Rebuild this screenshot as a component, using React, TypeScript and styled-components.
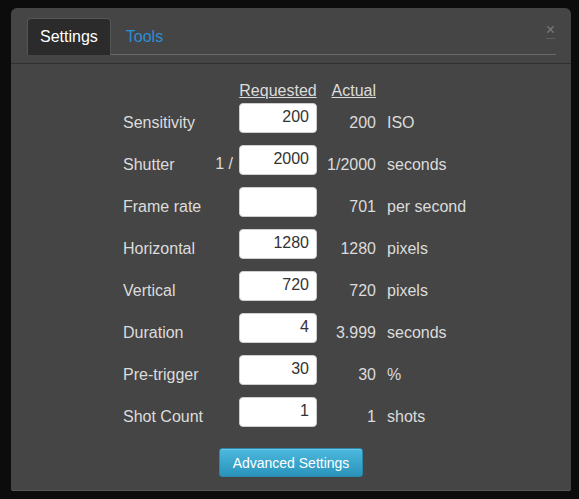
import React from "react";
import styled, { createGlobalStyle } from "styled-components";

const Global = createGlobalStyle`
  html, body { margin: 0; padding: 0; background: #0c0c0c; }
  body { font-family: "Liberation Sans", Arial, sans-serif; }
  #root { width: 579px; height: 499px; }
`;

const Page = styled.div`
  width: 579px;
  height: 499px;
  padding: 8px 8px 0 11px;
  box-sizing: border-box;
  background: #0c0c0c;
`;

const Dialog = styled.div`
  position: relative;
  width: 560px;
  height: 483px;
  box-sizing: border-box;
  background: #454545;
  border-radius: 6px 6px 2px 2px;
  border-bottom: 1px solid #585858;
  display: flex;
  flex-direction: column;
`;

const TitleBar = styled.div`
  height: 56px;
  box-sizing: border-box;
  padding: 9px 15px 0 16px;
  border-bottom: 1px solid #303030;
`;

const TabList = styled.div`
  display: flex;
  gap: 2px;
  height: 37px;
  border-bottom: 1px solid #6a6a6a;
  align-items: flex-end;
`;

const Tab = styled.div<{ $active?: boolean }>`
  height: 37px;
  box-sizing: border-box;
  padding: 0 12px;
  display: flex;
  align-items: center;
  font-size: 16px;
  margin-bottom: -1px;
  color: ${(p) => (p.$active ? "#ffffff" : "#2b8fd8")};
  background: ${(p) => (p.$active ? "#2b2b2b" : "transparent")};
  border: 1px solid ${(p) => (p.$active ? "#565656" : "transparent")};
  border-bottom: none;
  border-radius: 4px 4px 0 0;
`;

const Close = styled.div`
  position: absolute;
  right: 16px;
  top: 14px;
  font-size: 16px;
  line-height: 16px;
  color: #7a7a7a;
  border-bottom: 1px solid #5e5e5e;
`;

const Body = styled.div`
  flex: 1;
  padding: 15px 0 0 112px;
  display: flex;
  flex-direction: column;
`;

const Grid = styled.div`
  display: grid;
  grid-template-columns: 90px 26px 78px 59px auto;
  grid-template-rows: 12px;
  grid-auto-rows: 30px;
  row-gap: 12px;
  align-items: center;
  color: #dcdcdc;
  font-size: 16px;
`;

const Head = styled.div<{ $align: string }>`
  align-self: start;
  margin-top: 3px;
  text-decoration: underline;
  line-height: 18px;
  height: 12px;
  text-align: ${(p) => p.$align};
`;

const Label = styled.div`
  padding-top: 10px;
`;

const Prefix = styled.div`
  text-align: right;
  padding-right: 6px;
  padding-top: 8px;
`;

const Field = styled.input`
  width: 78px;
  height: 30px;
  box-sizing: border-box;
  border: 1px solid #cfcfcf;
  border-radius: 4px;
  background: #fff;
  color: #333;
  font-family: "Liberation Sans", Arial, sans-serif;
  font-size: 16px;
  text-align: right;
  padding: 0 7px 2px 6px;
  outline: none;
`;

const Actual = styled.div`
  text-align: right;
  padding-top: 10px;
`;

const Unit = styled.div`
  padding-left: 11px;
  padding-top: 10px;
  white-space: nowrap;
`;

const ButtonRow = styled.div`
  margin: 21px 0 0 -112px;
  display: flex;
  justify-content: center;
`;

const Button = styled.button`
  width: 144px;
  height: 29px;
  border: 1px solid #2a88ad;
  border-radius: 3px;
  background: linear-gradient(#4cb9de, #2b93bb);
  color: #fff;
  font-family: "Liberation Sans", Arial, sans-serif;
  font-size: 14px;
  padding: 0 0 0 0;
  box-shadow: inset 0 1px 0 rgba(255, 255, 255, 0.2);
`;

const rows = [
  { label: "Sensitivity", prefix: "", value: "200", actual: "200", unit: "ISO" },
  { label: "Shutter", prefix: "1 /", value: "2000", actual: "1/2000", unit: "seconds" },
  { label: "Frame rate", prefix: "", value: "", actual: "701", unit: "per second" },
  { label: "Horizontal", prefix: "", value: "1280", actual: "1280", unit: "pixels" },
  { label: "Vertical", prefix: "", value: "720", actual: "720", unit: "pixels" },
  { label: "Duration", prefix: "", value: "4", actual: "3.999", unit: "seconds" },
  { label: "Pre-trigger", prefix: "", value: "30", actual: "30", unit: "%" },
  { label: "Shot Count", prefix: "", value: "1", actual: "1", unit: "shots" },
];

export default function App() {
  return (
    <Page>
      <Global />
      <Dialog>
        <TitleBar>
          <TabList>
            <Tab $active>Settings</Tab>
            <Tab>Tools</Tab>
          </TabList>
        </TitleBar>
        <Close>×</Close>
        <Body>
          <Grid>
            <div />
            <div />
            <Head $align="center">Requested</Head>
            <Head $align="right">Actual</Head>
            <div />
            {rows.map((r) => (
              <React.Fragment key={r.label}>
                <Label>{r.label}</Label>
                <Prefix>{r.prefix}</Prefix>
                <Field defaultValue={r.value} />
                <Actual>{r.actual}</Actual>
                <Unit>{r.unit}</Unit>
              </React.Fragment>
            ))}
          </Grid>
          <ButtonRow>
            <Button>Advanced Settings</Button>
          </ButtonRow>
        </Body>
      </Dialog>
    </Page>
  );
}
